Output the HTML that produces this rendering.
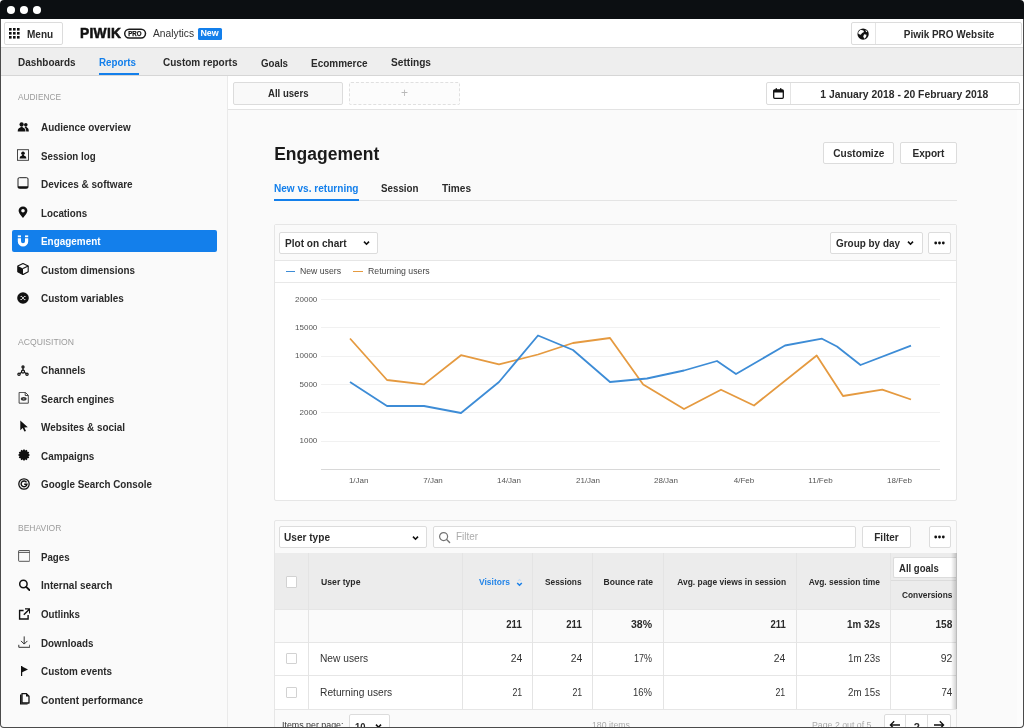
<!DOCTYPE html>
<html><head><meta charset="utf-8"><title>Piwik PRO Analytics</title>
<style>
*{box-sizing:border-box;margin:0;padding:0}
html,body{width:1024px;height:728px;overflow:hidden;background:#fff}
body{font-family:"Liberation Sans",sans-serif;color:#222;position:relative}
#frame{will-change:transform;position:absolute;left:0;top:0;width:1024px;height:728px;border-radius:4px;background:#fafafa;overflow:hidden}
#fb{position:absolute;left:0;top:19px;width:1024px;height:709px;border-radius:0 0 4px 4px;border:1px solid #4a4a4a;border-top:none;pointer-events:none}
</style></head><body>
<div id="frame">
<div style="position:absolute;left:0px;top:0px;width:1024px;height:19px;background:#0c0f12;border-radius:0px;"></div>
<svg style="position:absolute;left:6px;top:4.5px;" width="10" height="10" viewBox="0 0 10 10"><circle cx="5" cy="5" r="4.05" fill="#fff"/></svg>
<svg style="position:absolute;left:19px;top:4.5px;" width="10" height="10" viewBox="0 0 10 10"><circle cx="5" cy="5" r="4.05" fill="#fff"/></svg>
<svg style="position:absolute;left:32px;top:4.5px;" width="10" height="10" viewBox="0 0 10 10"><circle cx="5" cy="5" r="4.05" fill="#fff"/></svg>
<div style="position:absolute;left:0px;top:19px;width:1024px;height:28px;background:#fff;border-radius:0px;"></div>
<div style="position:absolute;left:0px;top:47px;width:1024px;height:1px;background:#dadada"></div>
<div style="position:absolute;left:4px;top:22px;width:59px;height:23px;background:#fff;border:1px solid #dcdcdc;border-radius:2px;"></div>
<svg style="position:absolute;left:9px;top:28px;fill:#111" width="11" height="11" viewBox="0 0 11 11"><rect x="0" y="0" width="2.6" height="2.6"/><rect x="0" y="4" width="2.6" height="2.6"/><rect x="0" y="8" width="2.6" height="2.6"/><rect x="4" y="0" width="2.6" height="2.6"/><rect x="4" y="4" width="2.6" height="2.6"/><rect x="4" y="8" width="2.6" height="2.6"/><rect x="8" y="0" width="2.6" height="2.6"/><rect x="8" y="4" width="2.6" height="2.6"/><rect x="8" y="8" width="2.6" height="2.6"/></svg>
<span style="position:absolute;top:27.83px;line-height:13px;font-size:11px;white-space:nowrap;color:#2a2a2a;font-weight:bold;left:26.70px;transform-origin:0 50%;transform:scaleX(0.9122);">Menu</span>
<span style="position:absolute;top:25.31px;line-height:17px;font-size:14.2px;white-space:nowrap;color:#111;font-weight:bold;letter-spacing:0.3px;left:80.30px;transform-origin:0 50%;transform:scaleX(0.9713);-webkit-text-stroke:0.55px #111;">PIWIK</span>
<svg style="position:absolute;left:123px;top:27px;" width="25" height="13" viewBox="0 0 25 13"><rect x="1.7" y="2.2" width="20.8" height="8.8" rx="4.4" fill="none" stroke="#1a1a1a" stroke-width="1.5"/></svg>
<span style="position:absolute;top:29.66px;line-height:8px;font-size:6.3px;white-space:nowrap;color:#111;font-weight:bold;left:128.37px;transform-origin:50% 50%;transform:scaleX(0.9669);-webkit-text-stroke:0.25px #111;">PRO</span>
<span style="position:absolute;top:26.93px;line-height:13px;font-size:11px;white-space:nowrap;color:#333;left:152.50px;transform-origin:0 50%;transform:scaleX(0.9315);">Analytics</span>
<div style="position:absolute;left:198px;top:27.5px;width:24px;height:12.0px;background:#137feb;border-radius:1.5px;"></div>
<span style="position:absolute;top:28.04px;line-height:11px;font-size:9.3px;white-space:nowrap;color:#fff;font-weight:bold;left:200.44px;transform-origin:50% 50%;transform:scaleX(0.9570);">New</span>
<div style="position:absolute;left:851px;top:22px;width:170.5px;height:23px;background:#fff;border:1px solid #dcdcdc;border-radius:2px;"></div>
<div style="position:absolute;left:875px;top:23px;width:1px;height:21px;background:#e4e4e4"></div>
<svg style="position:absolute;left:857.4px;top:27.5px;" width="12.2" height="12.2" viewBox="0 0 11 11"><circle cx="5.5" cy="5.5" r="5.1" fill="#111"/><path d="M3.2 1.6 L5.8 2.2 L6.3 3.6 L4.6 4.6 L3.4 6.2 L1.3 5.4 L1.2 3.6 Z M6.4 5.6 L8.6 6.2 L8.2 8.2 L6.6 9.6 L5.6 7.6 Z M7.6 1.6 L9.4 3.2 L8.2 3.8 Z" fill="#fff"/></svg>
<span style="position:absolute;top:28.03px;line-height:13px;font-size:11px;white-space:nowrap;color:#2a2a2a;font-weight:bold;left:898.68px;transform-origin:50% 50%;transform:scaleX(0.9046);">Piwik PRO Website</span>
<div style="position:absolute;left:0px;top:48px;width:1024px;height:27px;background:#eeeeee;border-radius:0px;"></div>
<div style="position:absolute;left:0px;top:75px;width:1024px;height:1px;background:#d6d6d6"></div>
<span style="position:absolute;top:56.13px;line-height:13px;font-size:11px;white-space:nowrap;color:#2a2a2a;font-weight:bold;left:18.00px;transform-origin:0 50%;transform:scaleX(0.9045);">Dashboards</span>
<span style="position:absolute;top:56.13px;line-height:13px;font-size:11px;white-space:nowrap;color:#137feb;font-weight:bold;left:99.30px;transform-origin:0 50%;transform:scaleX(0.8902);">Reports</span>
<span style="position:absolute;top:56.13px;line-height:13px;font-size:11px;white-space:nowrap;color:#2a2a2a;font-weight:bold;left:162.50px;transform-origin:0 50%;transform:scaleX(0.9096);">Custom reports</span>
<span style="position:absolute;top:57.13px;line-height:13px;font-size:11px;white-space:nowrap;color:#2a2a2a;font-weight:bold;left:261.00px;transform-origin:0 50%;transform:scaleX(0.8833);">Goals</span>
<span style="position:absolute;top:57.13px;line-height:13px;font-size:11px;white-space:nowrap;color:#2a2a2a;font-weight:bold;left:311.00px;transform-origin:0 50%;transform:scaleX(0.9059);">Ecommerce</span>
<span style="position:absolute;top:56.13px;line-height:13px;font-size:11px;white-space:nowrap;color:#2a2a2a;font-weight:bold;left:390.50px;transform-origin:0 50%;transform:scaleX(0.9218);">Settings</span>
<div style="position:absolute;left:99px;top:73px;width:40px;height:2px;background:#137feb"></div>
<div style="position:absolute;left:227px;top:76px;width:1px;height:652px;background:#eaeaea"></div>
<span style="position:absolute;top:91.94px;line-height:10px;font-size:8.5px;white-space:nowrap;color:#9b9b9b;left:18.00px;transform-origin:0 50%;transform:scaleX(0.9789);">AUDIENCE</span>
<span style="position:absolute;top:336.74px;line-height:10px;font-size:8.5px;white-space:nowrap;color:#9b9b9b;left:18.00px;transform-origin:0 50%;transform:scaleX(1.0135);">ACQUISITION</span>
<span style="position:absolute;top:523.14px;line-height:10px;font-size:8.5px;white-space:nowrap;color:#9b9b9b;left:18.00px;transform-origin:0 50%;">BEHAVIOR</span>
<div style="position:absolute;left:12px;top:230px;width:205px;height:22px;background:#137feb;border-radius:2px;"></div>
<span style="position:absolute;top:121.03px;line-height:13px;font-size:11px;white-space:nowrap;color:#2a2a2a;font-weight:bold;left:40.50px;transform-origin:0 50%;transform:scaleX(0.8998);">Audience overview</span>
<span style="position:absolute;top:149.53px;line-height:13px;font-size:11px;white-space:nowrap;color:#2a2a2a;font-weight:bold;left:40.50px;transform-origin:0 50%;transform:scaleX(0.8846);">Session log</span>
<span style="position:absolute;top:178.03px;line-height:13px;font-size:11px;white-space:nowrap;color:#2a2a2a;font-weight:bold;left:40.50px;transform-origin:0 50%;transform:scaleX(0.9085);">Devices &amp; software</span>
<span style="position:absolute;top:206.53px;line-height:13px;font-size:11px;white-space:nowrap;color:#2a2a2a;font-weight:bold;left:40.50px;transform-origin:0 50%;transform:scaleX(0.8888);">Locations</span>
<span style="position:absolute;top:235.03px;line-height:13px;font-size:11px;white-space:nowrap;color:#fff;font-weight:bold;left:40.50px;transform-origin:0 50%;transform:scaleX(0.9026);">Engagement</span>
<span style="position:absolute;top:263.53px;line-height:13px;font-size:11px;white-space:nowrap;color:#2a2a2a;font-weight:bold;left:40.50px;transform-origin:0 50%;transform:scaleX(0.8936);">Custom dimensions</span>
<span style="position:absolute;top:292.03px;line-height:13px;font-size:11px;white-space:nowrap;color:#2a2a2a;font-weight:bold;left:40.50px;transform-origin:0 50%;transform:scaleX(0.9031);">Custom variables</span>
<span style="position:absolute;top:364.33px;line-height:13px;font-size:11px;white-space:nowrap;color:#2a2a2a;font-weight:bold;left:40.50px;transform-origin:0 50%;transform:scaleX(0.8985);">Channels</span>
<span style="position:absolute;top:392.83px;line-height:13px;font-size:11px;white-space:nowrap;color:#2a2a2a;font-weight:bold;left:40.50px;transform-origin:0 50%;transform:scaleX(0.9025);">Search engines</span>
<span style="position:absolute;top:421.23px;line-height:13px;font-size:11px;white-space:nowrap;color:#2a2a2a;font-weight:bold;left:40.50px;transform-origin:0 50%;transform:scaleX(0.9011);">Websites &amp; social</span>
<span style="position:absolute;top:449.63px;line-height:13px;font-size:11px;white-space:nowrap;color:#2a2a2a;font-weight:bold;left:40.50px;transform-origin:0 50%;transform:scaleX(0.8993);">Campaigns</span>
<span style="position:absolute;top:478.03px;line-height:13px;font-size:11px;white-space:nowrap;color:#2a2a2a;font-weight:bold;left:40.50px;transform-origin:0 50%;transform:scaleX(0.8947);">Google Search Console</span>
<span style="position:absolute;top:550.63px;line-height:13px;font-size:11px;white-space:nowrap;color:#2a2a2a;font-weight:bold;left:40.50px;transform-origin:0 50%;transform:scaleX(0.8824);">Pages</span>
<span style="position:absolute;top:579.23px;line-height:13px;font-size:11px;white-space:nowrap;color:#2a2a2a;font-weight:bold;left:40.50px;transform-origin:0 50%;transform:scaleX(0.9111);">Internal search</span>
<span style="position:absolute;top:608.03px;line-height:13px;font-size:11px;white-space:nowrap;color:#2a2a2a;font-weight:bold;left:40.50px;transform-origin:0 50%;transform:scaleX(0.8846);">Outlinks</span>
<span style="position:absolute;top:636.83px;line-height:13px;font-size:11px;white-space:nowrap;color:#2a2a2a;font-weight:bold;left:40.50px;transform-origin:0 50%;transform:scaleX(0.8920);">Downloads</span>
<span style="position:absolute;top:665.43px;line-height:13px;font-size:11px;white-space:nowrap;color:#2a2a2a;font-weight:bold;left:40.50px;transform-origin:0 50%;transform:scaleX(0.9004);">Custom events</span>
<span style="position:absolute;top:694.03px;line-height:13px;font-size:11px;white-space:nowrap;color:#2a2a2a;font-weight:bold;left:40.50px;transform-origin:0 50%;transform:scaleX(0.9177);">Content performance</span>
<svg style="position:absolute;left:17.4px;top:120.8px;" width="12" height="12" viewBox="0 0 12 12"><g fill="#111"><circle cx="4.6" cy="3.4" r="2.15"/><path d="M0.7 10.6 C0.7 8 1.7 6.9 3.4 6.6 L3.8 5.5 H5.4 L5.8 6.6 C7.5 6.9 8.5 8 8.5 10.6 Z"/><circle cx="8.8" cy="3.7" r="1.8"/><path d="M7.6 6.3 L8 5.6 H9.5 L9.9 6.5 C11.2 6.8 11.8 7.9 11.8 10.6 L9.2 10.6 C9.2 8.6 8.7 7.1 7.6 6.3 Z"/></g></svg>
<svg style="position:absolute;left:17.4px;top:148.7px;" width="12" height="12" viewBox="0 0 12 12"><rect x="0.5" y="0.7" width="11" height="10.6" fill="none" stroke="#333" stroke-width="0.9"/><circle cx="6" cy="4.3" r="1.8" fill="#111"/><path d="M2.6 9.6 C2.6 7.6 3.6 6.9 4.8 6.7 L5.2 5.8 H6.8 L7.2 6.7 C8.4 6.9 9.4 7.6 9.4 9.6 Z" fill="#111"/></svg>
<svg style="position:absolute;left:17.4px;top:177.4px;" width="12" height="12" viewBox="0 0 12 12"><rect x="1" y="0.7" width="10" height="10.6" rx="1.3" fill="none" stroke="#222" stroke-width="1"/><path d="M1 9.2 H11 V10.3 Q11 11.3 10 11.3 H2 Q1 11.3 1 10.3 Z" fill="#111"/></svg>
<svg style="position:absolute;left:17.4px;top:206.3px;" width="12" height="12" viewBox="0 0 12 12"><path d="M6 0.4 C3.5 0.4 1.6 2.2 1.6 4.7 C1.6 7.5 6 11.8 6 11.8 C6 11.8 10.4 7.5 10.4 4.7 C10.4 2.2 8.5 0.4 6 0.4 Z M6 2.9 A1.8 1.8 0 1 1 6 6.5 A1.8 1.8 0 1 1 6 2.9 Z" fill="#111" fill-rule="evenodd"/></svg>
<svg style="position:absolute;left:17.4px;top:235px;" width="12" height="12" viewBox="0 0 12 12"><g fill="#fff"><rect x="0.8" y="0.4" width="3.2" height="1.8"/><rect x="8" y="0.4" width="3.2" height="1.8"/><path d="M0.8 3.2 H4 V6.2 A2 2 0 0 0 8 6.2 V3.2 H11.2 V6.4 A5.2 5.2 0 0 1 0.8 6.4 Z"/></g></svg>
<svg style="position:absolute;left:17.4px;top:262.5px;" width="12" height="12" viewBox="0 0 12 12"><path d="M6 0.6 L11.2 3 V8.8 L6 11.6 L0.8 8.8 V3 Z" fill="none" stroke="#111" stroke-width="1.1" stroke-linejoin="round"/><path d="M0.8 3 L6 5.6 V11.6 L0.8 8.8 Z" fill="#111"/><path d="M6 5.6 L11.2 3" stroke="#111" stroke-width="1.1" fill="none"/></svg>
<svg style="position:absolute;left:17.4px;top:292px;" width="12" height="12" viewBox="0 0 12 12"><circle cx="6" cy="6" r="5.8" fill="#111"/><path d="M4 4.4 C4.9 4.1 5.3 4.8 6 6 C6.7 7.2 7.1 7.9 8 7.6 M8.1 4.4 C7.2 4.2 6.8 4.9 6 6 C5.2 7.1 4.8 7.8 3.9 7.6" stroke="#fff" stroke-width="1" fill="none" stroke-linecap="round"/></svg>
<svg style="position:absolute;left:17.4px;top:364.6px;" width="12" height="12" viewBox="0 0 12 12"><g fill="none" stroke="#111" stroke-width="1.25"><circle cx="6" cy="1.9" r="1.05"/><circle cx="2" cy="9.2" r="1.15"/><circle cx="10" cy="9.2" r="1.15"/><circle cx="6" cy="6.5" r="1.5"/><path d="M6 3 V5 M4.7 7.3 L3 8.5 M7.3 7.3 L9 8.5"/></g></svg>
<svg style="position:absolute;left:17.4px;top:392.40000000000003px;" width="12" height="12" viewBox="0 0 12 12"><path d="M2.1 0.4 H8.4 L11.3 3.3 V11.2 H2.1 Z" fill="none" stroke="#333" stroke-width="0.9"/><path d="M8.2 0.6 V3.5 H11.1" fill="none" stroke="#333" stroke-width="0.9"/><ellipse cx="6.7" cy="6.8" rx="2.9" ry="1.9" fill="#333"/><circle cx="6.7" cy="6.8" r="0.9" fill="#888"/></svg>
<svg style="position:absolute;left:17.599999999999998px;top:420.3px;" width="12" height="12" viewBox="0 0 12 12"><path d="M2.3 0.6 L2.3 10.2 L4.7 8 L6.4 11.6 L8 10.9 L6.3 7.4 L9.8 7.3 Z" fill="#111"/></svg>
<svg style="position:absolute;left:17.599999999999998px;top:448.90000000000003px;" width="12" height="12" viewBox="0 0 12 12"><polygon points="12.00,6.00 10.54,7.22 11.20,9.00 9.32,9.32 9.00,11.20 7.22,10.54 6.00,12.00 4.78,10.54 3.00,11.20 2.68,9.32 0.80,9.00 1.46,7.22 0.00,6.00 1.46,4.78 0.80,3.00 2.68,2.68 3.00,0.80 4.78,1.46 6.00,0.00 7.22,1.46 9.00,0.80 9.32,2.68 11.20,3.00 10.54,4.78" fill="#111"/></svg>
<svg style="position:absolute;left:17.599999999999998px;top:477.8px;" width="12" height="12" viewBox="0 0 12 12"><circle cx="6" cy="6" r="5.2" fill="none" stroke="#111" stroke-width="1.3"/><path d="M8.5 4.3 A2.9 2.9 0 1 0 8.9 6.3 H6.2" fill="none" stroke="#111" stroke-width="1.4"/></svg>
<svg style="position:absolute;left:18.2px;top:549.9px;" width="12" height="12" viewBox="0 0 12 12"><rect x="0.6" y="0.5" width="11.2" height="10.8" rx="0.6" fill="none" stroke="#444" stroke-width="0.9"/><path d="M0.6 2.4 H11.8" stroke="#444" stroke-width="0.9"/></svg>
<svg style="position:absolute;left:17.599999999999998px;top:578.7px;" width="12" height="12" viewBox="0 0 12 12"><circle cx="5.4" cy="5" r="3.7" fill="none" stroke="#111" stroke-width="1.5"/><path d="M8.2 7.8 L11.4 11" stroke="#111" stroke-width="1.8" stroke-linecap="round"/></svg>
<svg style="position:absolute;left:17.599999999999998px;top:607.6px;" width="12" height="12" viewBox="0 0 12 12"><path d="M5.6 2.5 H1.6 V11 H10.1 V7" fill="none" stroke="#111" stroke-width="1.4"/><path d="M7 0.9 H11.7 V5.6 M11.4 1.2 L5.8 6.8" fill="none" stroke="#111" stroke-width="1.4"/></svg>
<svg style="position:absolute;left:18.2px;top:636.0px;" width="12" height="12" viewBox="0 0 12 12"><path d="M6.2 0.4 V8 M3 4.9 L6.2 8.1 L9.4 4.9" fill="none" stroke="#333" stroke-width="1"/><path d="M0.8 8.8 V11.3 H11.8 V8.8" fill="none" stroke="#333" stroke-width="1"/></svg>
<svg style="position:absolute;left:18.099999999999998px;top:664.5px;" width="12" height="12" viewBox="0 0 12 12"><path d="M3.6 1 V11" stroke="#111" stroke-width="1.2"/><path d="M3.6 1.2 L10 4.4 L3.6 7.4 Z" fill="#111"/></svg>
<svg style="position:absolute;left:17.9px;top:693.1px;" width="12" height="12" viewBox="0 0 12 12"><path d="M4 0.6 H8.4 L11 3.2 V10 H4 Z" fill="none" stroke="#111" stroke-width="1.3" stroke-linejoin="round"/><path d="M8 0.6 L11 3.6 L8 3.6 Z" fill="#111"/><path d="M2 1.6 H3.6 V10.4 H9.6 V11.4 H2 Z" fill="#111"/></svg>
<div style="position:absolute;left:228px;top:76px;width:796px;height:33.5px;background:#fff;border-radius:0px;"></div>
<div style="position:absolute;left:228px;top:109px;width:796px;height:1px;background:#e3e3e3"></div>
<div style="position:absolute;left:233px;top:81.5px;width:110px;height:23.0px;background:#f9f9f9;border:1px solid #dcdcdc;border-radius:2px;"></div>
<span style="position:absolute;top:87.43px;line-height:13px;font-size:11px;white-space:nowrap;color:#2a2a2a;font-weight:bold;left:265.07px;transform-origin:50% 50%;transform:scaleX(0.8716);">All users</span>
<div style="position:absolute;left:349px;top:81.5px;width:110.5px;height:23px;border:1px dashed #e0e0e0;border-radius:2px;background:#fcfcfc"></div>
<span style="position:absolute;top:86.22px;line-height:14px;font-size:12px;white-space:nowrap;color:#b8b8b8;left:401.00px;transform-origin:50% 50%;">+</span>
<div style="position:absolute;left:766px;top:81.5px;width:253.5px;height:23.0px;background:#fff;border:1px solid #dcdcdc;border-radius:2px;"></div>
<div style="position:absolute;left:790px;top:82.5px;width:1px;height:21.0px;background:#e4e4e4"></div>
<svg style="position:absolute;left:773px;top:87.5px;" width="11" height="11" viewBox="0 0 11 11"><rect x="0.7" y="1.9" width="9.6" height="8.4" rx="1" fill="none" stroke="#111" stroke-width="1.3"/><rect x="0.7" y="1.9" width="9.6" height="2.6" fill="#111"/><rect x="2.6" y="0.2" width="1.4" height="2.4" fill="#111"/><rect x="7" y="0.2" width="1.4" height="2.4" fill="#111"/></svg>
<span style="position:absolute;top:87.63px;line-height:13px;font-size:11px;white-space:nowrap;color:#2a2a2a;font-weight:bold;left:815.22px;transform-origin:50% 50%;transform:scaleX(0.9409);">1 January 2018 - 20 February 2018</span>
<span style="position:absolute;top:144.29px;line-height:21px;font-size:17.5px;white-space:nowrap;color:#1a1a1a;font-weight:bold;left:274.20px;transform-origin:0 50%;">Engagement</span>
<div style="position:absolute;left:822.5px;top:142px;width:71.5px;height:22px;background:#fff;border:1px solid #dcdcdc;border-radius:2px;"></div>
<span style="position:absolute;top:147.23px;line-height:13px;font-size:11px;white-space:nowrap;color:#2a2a2a;font-weight:bold;left:830.99px;transform-origin:50% 50%;transform:scaleX(0.9170);">Customize</span>
<div style="position:absolute;left:899.5px;top:142px;width:57.0px;height:22px;background:#fff;border:1px solid #dcdcdc;border-radius:2px;"></div>
<span style="position:absolute;top:147.23px;line-height:13px;font-size:11px;white-space:nowrap;color:#2a2a2a;font-weight:bold;left:910.78px;transform-origin:50% 50%;transform:scaleX(0.9185);">Export</span>
<div style="position:absolute;left:274px;top:200px;width:682.5px;height:1px;background:#e4e4e4"></div>
<span style="position:absolute;top:181.73px;line-height:13px;font-size:11px;white-space:nowrap;color:#137feb;font-weight:bold;left:274.00px;transform-origin:0 50%;transform:scaleX(0.9155);">New vs. returning</span>
<div style="position:absolute;left:274px;top:199px;width:84.5px;height:2px;background:#137feb"></div>
<span style="position:absolute;top:181.73px;line-height:13px;font-size:11px;white-space:nowrap;color:#2a2a2a;font-weight:bold;left:381.00px;transform-origin:0 50%;transform:scaleX(0.8889);">Session</span>
<span style="position:absolute;top:181.73px;line-height:13px;font-size:11px;white-space:nowrap;color:#2a2a2a;font-weight:bold;left:442.30px;transform-origin:0 50%;transform:scaleX(0.9179);">Times</span>
<div style="position:absolute;left:274px;top:224px;width:683px;height:277px;background:#fff;border:1px solid #e6e6e6;border-radius:2px;"></div>
<div style="position:absolute;left:275px;top:225px;width:681px;height:35px;background:#fafafa;border-radius:0px;"></div>
<div style="position:absolute;left:274.5px;top:260px;width:681.5px;height:1px;background:#e6e6e6"></div>
<div style="position:absolute;left:274.5px;top:282px;width:681.5px;height:1px;background:#e8e8e8"></div>
<div style="position:absolute;left:279px;top:231.5px;width:99px;height:22.0px;background:#fff;border:1px solid #dcdcdc;border-radius:2px;"></div>
<span style="position:absolute;top:236.73px;line-height:13px;font-size:11px;white-space:nowrap;color:#2a2a2a;font-weight:bold;left:284.80px;transform-origin:0 50%;transform:scaleX(0.9148);">Plot on chart</span>
<svg style="position:absolute;left:363.2px;top:240px;" width="7" height="6" viewBox="0 0 7 6"><path d="M1 1.6 L3.5 4.2 L6 1.6" fill="none" stroke="#111" stroke-width="1.6"/></svg>
<div style="position:absolute;left:830px;top:231.5px;width:92.5px;height:22.0px;background:#fff;border:1px solid #dcdcdc;border-radius:2px;"></div>
<span style="position:absolute;top:236.73px;line-height:13px;font-size:11px;white-space:nowrap;color:#2a2a2a;font-weight:bold;left:835.60px;transform-origin:0 50%;transform:scaleX(0.9027);">Group by day</span>
<svg style="position:absolute;left:907.2px;top:240px;" width="7" height="6" viewBox="0 0 7 6"><path d="M1 1.6 L3.5 4.2 L6 1.6" fill="none" stroke="#111" stroke-width="1.6"/></svg>
<div style="position:absolute;left:928px;top:231.5px;width:22.5px;height:22.0px;background:#fff;border:1px solid #dcdcdc;border-radius:2px;"></div>
<svg style="position:absolute;left:933.7px;top:240.8px;fill:#111" width="11" height="4" viewBox="0 0 11 4"><circle cx="1.7" cy="2" r="1.4"/><circle cx="5.5" cy="2" r="1.4"/><circle cx="9.3" cy="2" r="1.4"/></svg>
<div style="position:absolute;left:285.5px;top:270.7px;width:9.0px;height:1.5px;background:#3d8cd6"></div>
<span style="position:absolute;top:266.24px;line-height:11px;font-size:9px;white-space:nowrap;color:#444;left:300.00px;transform-origin:0 50%;transform:scaleX(0.9644);">New users</span>
<div style="position:absolute;left:353px;top:270.7px;width:9.5px;height:1.5px;background:#e59a40"></div>
<span style="position:absolute;top:266.24px;line-height:11px;font-size:9px;white-space:nowrap;color:#444;left:367.80px;transform-origin:0 50%;transform:scaleX(0.9711);">Returning users</span>
<span style="position:absolute;top:294.55px;line-height:10px;font-size:8px;white-space:nowrap;color:#555;right:706.70px;transform-origin:100% 50%;">20000</span>
<div style="position:absolute;left:321px;top:299px;width:619px;height:1px;background:#f1f1f1"></div>
<span style="position:absolute;top:322.85px;line-height:10px;font-size:8px;white-space:nowrap;color:#555;right:706.70px;transform-origin:100% 50%;">15000</span>
<div style="position:absolute;left:321px;top:327px;width:619px;height:1px;background:#f1f1f1"></div>
<span style="position:absolute;top:351.25px;line-height:10px;font-size:8px;white-space:nowrap;color:#555;right:706.70px;transform-origin:100% 50%;">10000</span>
<div style="position:absolute;left:321px;top:356px;width:619px;height:1px;background:#f1f1f1"></div>
<span style="position:absolute;top:379.65px;line-height:10px;font-size:8px;white-space:nowrap;color:#555;right:706.70px;transform-origin:100% 50%;">5000</span>
<div style="position:absolute;left:321px;top:384px;width:619px;height:1px;background:#f1f1f1"></div>
<span style="position:absolute;top:407.95px;line-height:10px;font-size:8px;white-space:nowrap;color:#555;right:706.70px;transform-origin:100% 50%;">2000</span>
<div style="position:absolute;left:321px;top:412px;width:619px;height:1px;background:#f1f1f1"></div>
<span style="position:absolute;top:436.35px;line-height:10px;font-size:8px;white-space:nowrap;color:#555;right:706.70px;transform-origin:100% 50%;">1000</span>
<div style="position:absolute;left:321px;top:441px;width:619px;height:1px;background:#f1f1f1"></div>
<div style="position:absolute;left:321px;top:469px;width:619px;height:1px;background:#d8d8d8"></div>
<span style="position:absolute;top:475.75px;line-height:10px;font-size:8px;white-space:nowrap;color:#555;left:348.91px;transform-origin:50% 50%;">1/Jan</span>
<span style="position:absolute;top:475.75px;line-height:10px;font-size:8px;white-space:nowrap;color:#555;left:423.21px;transform-origin:50% 50%;">7/Jan</span>
<span style="position:absolute;top:475.75px;line-height:10px;font-size:8px;white-space:nowrap;color:#555;left:496.99px;transform-origin:50% 50%;">14/Jan</span>
<span style="position:absolute;top:475.75px;line-height:10px;font-size:8px;white-space:nowrap;color:#555;left:575.99px;transform-origin:50% 50%;">21/Jan</span>
<span style="position:absolute;top:475.75px;line-height:10px;font-size:8px;white-space:nowrap;color:#555;left:653.99px;transform-origin:50% 50%;">28/Jan</span>
<span style="position:absolute;top:475.75px;line-height:10px;font-size:8px;white-space:nowrap;color:#555;left:733.77px;transform-origin:50% 50%;">4/Feb</span>
<span style="position:absolute;top:475.75px;line-height:10px;font-size:8px;white-space:nowrap;color:#555;left:808.34px;transform-origin:50% 50%;">11/Feb</span>
<span style="position:absolute;top:475.75px;line-height:10px;font-size:8px;white-space:nowrap;color:#555;left:887.05px;transform-origin:50% 50%;">18/Feb</span>
<svg style="position:absolute;left:274px;top:225px;" width="682" height="276" viewBox="0 0 682 276"><polyline points="76,113.5 113,155 150,159.39999999999998 187,130.2 225,139.39999999999998 264,129.5 299,118 336,113 369.20000000000005,159.39999999999998 410,184 447,164.7 480,180.5 542.7,130.5 569,171 608.3,164.7 637,174.5" fill="none" stroke="#e59a40" stroke-width="1.8" stroke-linejoin="round"/><polyline points="76,157 113,181 150,181 187,188 225,157 264,110.5 299,125 336,157 373,153.5 410,145.5 443,136 462,149 511,120.5 548,113.69999999999999 563,121.5 586.5,140 637,120.69999999999999" fill="none" stroke="#3d8cd6" stroke-width="1.8" stroke-linejoin="round"/></svg>
<div style="position:absolute;left:273.5px;top:519.5px;width:683.5px;height:220.5px;background:#fafafa;border:1px solid #e6e6e6;border-radius:2px;"></div>
<div style="position:absolute;left:278.5px;top:525.5px;width:148.5px;height:22.5px;background:#fff;border:1px solid #dcdcdc;border-radius:2px;"></div>
<span style="position:absolute;top:531.03px;line-height:13px;font-size:11px;white-space:nowrap;color:#2a2a2a;font-weight:bold;left:284.00px;transform-origin:0 50%;transform:scaleX(0.9175);">User type</span>
<svg style="position:absolute;left:412.4px;top:535px;" width="7" height="6" viewBox="0 0 7 6"><path d="M1 1.6 L3.5 4.2 L6 1.6" fill="none" stroke="#111" stroke-width="1.6"/></svg>
<div style="position:absolute;left:433px;top:525.5px;width:422.5px;height:22.5px;background:#fff;border:1px solid #dcdcdc;border-radius:2px;"></div>
<svg style="position:absolute;left:437.5px;top:530.5px;" width="13" height="13" viewBox="0 0 13 13"><circle cx="5.6" cy="5.6" r="4" fill="none" stroke="#747474" stroke-width="1.2"/><path d="M8.6 8.6 L11.6 11.6" stroke="#747474" stroke-width="1.4" stroke-linecap="round"/></svg>
<span style="position:absolute;top:530.23px;line-height:13px;font-size:11px;white-space:nowrap;color:#ababab;left:456.30px;transform-origin:0 50%;transform:scaleX(0.9000);">Filter</span>
<div style="position:absolute;left:861.5px;top:525.5px;width:49.0px;height:22.5px;background:#fff;border:1px solid #dcdcdc;border-radius:2px;"></div>
<span style="position:absolute;top:531.03px;line-height:13px;font-size:11px;white-space:nowrap;color:#2a2a2a;font-weight:bold;left:872.75px;transform-origin:50% 50%;transform:scaleX(0.9036);">Filter</span>
<div style="position:absolute;left:928.5px;top:525.5px;width:22.0px;height:22.5px;background:#fff;border:1px solid #dcdcdc;border-radius:2px;"></div>
<svg style="position:absolute;left:934px;top:534.8px;fill:#111" width="11" height="4" viewBox="0 0 11 4"><circle cx="1.7" cy="2" r="1.4"/><circle cx="5.5" cy="2" r="1.4"/><circle cx="9.3" cy="2" r="1.4"/></svg>
<div style="position:absolute;left:274.5px;top:553px;width:681.5px;height:56px;background:#ececec;border-radius:0px;"></div>
<div style="position:absolute;left:274.5px;top:609px;width:681.5px;height:33px;background:#fafafa;border-radius:0px;"></div>
<div style="position:absolute;left:274.5px;top:642px;width:681.5px;height:67px;background:#fff;border-radius:0px;"></div>
<div style="position:absolute;left:274.5px;top:609px;width:681.5px;height:1px;background:#e6e6e6"></div>
<div style="position:absolute;left:274.5px;top:642px;width:681.5px;height:1px;background:#e6e6e6"></div>
<div style="position:absolute;left:274.5px;top:675px;width:681.5px;height:1px;background:#e6e6e6"></div>
<div style="position:absolute;left:274.5px;top:709px;width:681.5px;height:1px;background:#e6e6e6"></div>
<div style="position:absolute;left:308px;top:553px;width:1px;height:156px;background:#e4e4e4"></div>
<div style="position:absolute;left:462px;top:553px;width:1px;height:156px;background:#e4e4e4"></div>
<div style="position:absolute;left:532px;top:553px;width:1px;height:156px;background:#e4e4e4"></div>
<div style="position:absolute;left:592px;top:553px;width:1px;height:156px;background:#e4e4e4"></div>
<div style="position:absolute;left:663px;top:553px;width:1px;height:156px;background:#e4e4e4"></div>
<div style="position:absolute;left:796px;top:553px;width:1px;height:156px;background:#e4e4e4"></div>
<div style="position:absolute;left:890px;top:553px;width:1px;height:156px;background:#e4e4e4"></div>
<div style="position:absolute;left:285.8px;top:576.0px;width:11.599999999999966px;height:11.599999999999909px;background:#fff;border:1px solid #d2d2d2;border-radius:1px;"></div>
<div style="position:absolute;left:285.8px;top:652.8000000000001px;width:11.599999999999966px;height:11.599999999999909px;background:#fff;border:1px solid #d2d2d2;border-radius:1px;"></div>
<div style="position:absolute;left:285.8px;top:686.6px;width:11.599999999999966px;height:11.599999999999909px;background:#fff;border:1px solid #d2d2d2;border-radius:1px;"></div>
<span style="position:absolute;top:575.74px;line-height:12px;font-size:9.7px;white-space:nowrap;color:#2a2a2a;font-weight:bold;left:321.00px;transform-origin:0 50%;transform:scaleX(0.8935);">User type</span>
<span style="position:absolute;top:575.74px;line-height:12px;font-size:9.7px;white-space:nowrap;color:#2485e8;font-weight:bold;left:479.00px;transform-origin:0 50%;transform:scaleX(0.8756);">Visitors</span>
<svg style="position:absolute;left:515.5px;top:577px;" width="7" height="10" viewBox="0 0 7 10"><path d="M2 3.8 L3.5 2.4 L5 3.8" fill="none" stroke="#c4dcf5" stroke-width="1.1"/><path d="M1.2 6 L3.5 8.3 L5.8 6" fill="none" stroke="#1a80e8" stroke-width="1.5"/></svg>
<span style="position:absolute;top:575.74px;line-height:12px;font-size:9.7px;white-space:nowrap;color:#2a2a2a;font-weight:bold;right:442.00px;transform-origin:100% 50%;transform:scaleX(0.8593);">Sessions</span>
<span style="position:absolute;top:575.74px;line-height:12px;font-size:9.7px;white-space:nowrap;color:#2a2a2a;font-weight:bold;right:371.50px;transform-origin:100% 50%;transform:scaleX(0.8830);">Bounce rate</span>
<span style="position:absolute;top:575.74px;line-height:12px;font-size:9.7px;white-space:nowrap;color:#2a2a2a;font-weight:bold;right:238.40px;transform-origin:100% 50%;transform:scaleX(0.8703);">Avg. page views in session</span>
<span style="position:absolute;top:575.74px;line-height:12px;font-size:9.7px;white-space:nowrap;color:#2a2a2a;font-weight:bold;right:144.20px;transform-origin:100% 50%;transform:scaleX(0.8695);">Avg. session time</span>
<div style="position:absolute;left:891px;top:580px;width:65px;height:1px;background:#dcdcdc"></div>
<div style="position:absolute;left:893.3px;top:556.7px;width:62.700000000000045px;height:21.799999999999955px;background:#fff;border:1px solid #dcdcdc;border-radius:2px;border-right:none;border-radius:2px 0 0 2px;"></div>
<span style="position:absolute;top:561.73px;line-height:13px;font-size:11px;white-space:nowrap;color:#2a2a2a;font-weight:bold;left:899.30px;transform-origin:0 50%;transform:scaleX(0.8682);">All goals</span>
<span style="position:absolute;top:588.84px;line-height:12px;font-size:9.7px;white-space:nowrap;color:#2a2a2a;font-weight:bold;left:902.00px;transform-origin:0 50%;transform:scaleX(0.8578);">Conversions</span>
<span style="position:absolute;top:618.23px;line-height:13px;font-size:11px;white-space:nowrap;color:#2a2a2a;font-weight:bold;right:502.00px;transform-origin:100% 50%;transform:scaleX(0.8734);">211</span>
<span style="position:absolute;top:618.23px;line-height:13px;font-size:11px;white-space:nowrap;color:#2a2a2a;font-weight:bold;right:442.00px;transform-origin:100% 50%;transform:scaleX(0.8734);">211</span>
<span style="position:absolute;top:618.23px;line-height:13px;font-size:11px;white-space:nowrap;color:#2a2a2a;font-weight:bold;right:371.50px;transform-origin:100% 50%;transform:scaleX(0.9584);">38%</span>
<span style="position:absolute;top:618.23px;line-height:13px;font-size:11px;white-space:nowrap;color:#2a2a2a;font-weight:bold;right:238.40px;transform-origin:100% 50%;transform:scaleX(0.8621);">211</span>
<span style="position:absolute;top:618.23px;line-height:13px;font-size:11px;white-space:nowrap;color:#2a2a2a;font-weight:bold;right:144.20px;transform-origin:100% 50%;transform:scaleX(0.8952);">1m 32s</span>
<span style="position:absolute;top:618.23px;line-height:13px;font-size:11px;white-space:nowrap;color:#2a2a2a;font-weight:bold;right:71.50px;transform-origin:100% 50%;transform:scaleX(0.9208);">158</span>
<span style="position:absolute;top:652.23px;line-height:13px;font-size:11px;white-space:nowrap;color:#333;left:320.00px;transform-origin:0 50%;transform:scaleX(0.9276);">New users</span>
<span style="position:absolute;top:685.93px;line-height:13px;font-size:11px;white-space:nowrap;color:#333;left:320.00px;transform-origin:0 50%;transform:scaleX(0.9298);">Returning users</span>
<span style="position:absolute;top:652.23px;line-height:13px;font-size:11px;white-space:nowrap;color:#333;right:502.00px;transform-origin:100% 50%;transform:scaleX(0.9480);">24</span>
<span style="position:absolute;top:652.23px;line-height:13px;font-size:11px;white-space:nowrap;color:#333;right:442.00px;transform-origin:100% 50%;transform:scaleX(0.9480);">24</span>
<span style="position:absolute;top:652.23px;line-height:13px;font-size:11px;white-space:nowrap;color:#333;right:371.50px;transform-origin:100% 50%;transform:scaleX(0.8130);">17%</span>
<span style="position:absolute;top:652.23px;line-height:13px;font-size:11px;white-space:nowrap;color:#333;right:238.40px;transform-origin:100% 50%;transform:scaleX(0.9480);">24</span>
<span style="position:absolute;top:652.23px;line-height:13px;font-size:11px;white-space:nowrap;color:#333;right:144.20px;transform-origin:100% 50%;transform:scaleX(0.8871);">1m 23s</span>
<span style="position:absolute;top:652.23px;line-height:13px;font-size:11px;white-space:nowrap;color:#333;right:71.50px;transform-origin:100% 50%;transform:scaleX(0.9480);">92</span>
<span style="position:absolute;top:685.93px;line-height:13px;font-size:11px;white-space:nowrap;color:#333;right:502.00px;transform-origin:100% 50%;transform:scaleX(0.8009);">21</span>
<span style="position:absolute;top:685.93px;line-height:13px;font-size:11px;white-space:nowrap;color:#333;right:442.00px;transform-origin:100% 50%;transform:scaleX(0.8009);">21</span>
<span style="position:absolute;top:685.93px;line-height:13px;font-size:11px;white-space:nowrap;color:#333;right:371.50px;transform-origin:100% 50%;transform:scaleX(0.8630);">16%</span>
<span style="position:absolute;top:685.93px;line-height:13px;font-size:11px;white-space:nowrap;color:#333;right:238.40px;transform-origin:100% 50%;transform:scaleX(0.8009);">21</span>
<span style="position:absolute;top:685.93px;line-height:13px;font-size:11px;white-space:nowrap;color:#333;right:144.20px;transform-origin:100% 50%;transform:scaleX(0.8871);">2m 15s</span>
<span style="position:absolute;top:685.93px;line-height:13px;font-size:11px;white-space:nowrap;color:#333;right:71.50px;transform-origin:100% 50%;transform:scaleX(0.8827);">74</span>
<div style="position:absolute;left:950.5px;top:553px;width:6px;height:156px;background:linear-gradient(to right,rgba(0,0,0,0),rgba(0,0,0,0.2))"></div>
<span style="position:absolute;top:719.34px;line-height:11px;font-size:9.5px;white-space:nowrap;color:#333;left:281.60px;transform-origin:0 50%;transform:scaleX(0.9317);">Items per page:</span>
<div style="position:absolute;left:349px;top:714.4px;width:41px;height:25.600000000000023px;background:#fff;border:1px solid #dcdcdc;border-radius:2px;"></div>
<span style="position:absolute;top:721.03px;line-height:13px;font-size:11px;white-space:nowrap;color:#2a2a2a;font-weight:bold;left:354.70px;transform-origin:0 50%;transform:scaleX(0.8581);">10</span>
<svg style="position:absolute;left:375px;top:723.2px;" width="7" height="6" viewBox="0 0 7 6"><path d="M1 1.6 L3.5 4.2 L6 1.6" fill="none" stroke="#111" stroke-width="1.6"/></svg>
<span style="position:absolute;top:719.34px;line-height:11px;font-size:9.5px;white-space:nowrap;color:#ababab;left:592.00px;transform-origin:0 50%;transform:scaleX(0.9226);">180 items</span>
<span style="position:absolute;top:719.34px;line-height:11px;font-size:9.5px;white-space:nowrap;color:#ababab;left:811.70px;transform-origin:0 50%;transform:scaleX(0.9233);">Page 2 out of 5</span>
<div style="position:absolute;left:883.5px;top:714.4px;width:67.5px;height:25.600000000000023px;background:#fff;border:1px solid #dcdcdc;border-radius:2px;"></div>
<div style="position:absolute;left:905px;top:715px;width:1px;height:25px;background:#dedede"></div>
<div style="position:absolute;left:927px;top:715px;width:1px;height:25px;background:#dedede"></div>
<svg style="position:absolute;left:888.5px;top:720px;" width="12" height="10" viewBox="0 0 12 10"><path d="M11 5 H1.5 M5.2 1.2 L1.4 5 L5.2 8.8" fill="none" stroke="#111" stroke-width="1.3"/></svg>
<svg style="position:absolute;left:933px;top:720px;" width="12" height="10" viewBox="0 0 12 10"><path d="M1 5 H10.5 M6.8 1.2 L10.6 5 L6.8 8.8" fill="none" stroke="#111" stroke-width="1.3"/></svg>
<span style="position:absolute;top:721.03px;line-height:13px;font-size:11px;white-space:nowrap;color:#2a2a2a;font-weight:bold;left:913.74px;transform-origin:50% 50%;">2</span>
<div style="position:absolute;left:1017px;top:110px;width:6px;height:617px;background:#fcfcfc"></div>
</div>
<div id="fb"></div>
</body></html>
